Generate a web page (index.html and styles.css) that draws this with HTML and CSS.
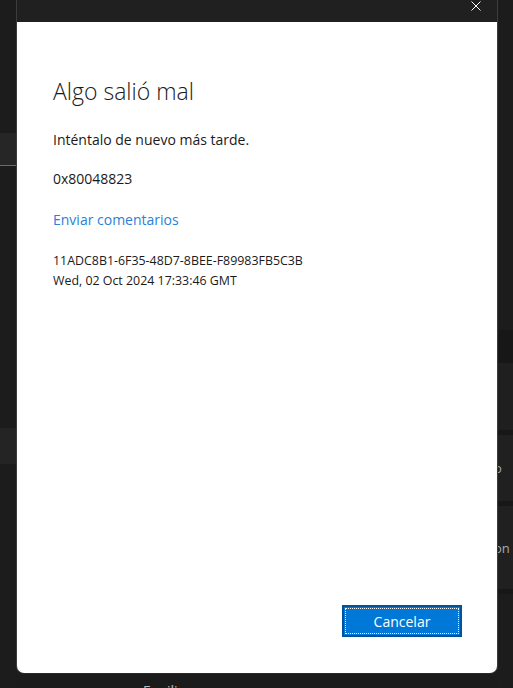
FILE: index.html
```html
<!DOCTYPE html>
<html>
<head>
    <title>Algo salió mal</title>
    <link rel="stylesheet" href="styles.css">
</head>
<body>

    <div class="app">
        <div class="rail rail-left">
            <div class="band band-tab"></div>
            <div class="band band-row"></div>
        </div>
        <div class="main">
            <div class="main-footer">
                <span class="account">Eguiliz</span>
            </div>
        </div>
        <div class="rail rail-right">
            <div class="band band-dark"></div>
            <div class="band band-item"><span>o</span></div>
            <div class="band band-item band-item-tall"><span>on c</span></div>
        </div>
    </div>

    <div class="dialog">
        <div class="titlebar">
            <button class="close-btn" title="Cerrar">
                <svg width="10" height="10" viewBox="0 0 10 10">
                    <path d="M0.5 0.5 L9.5 9.5 M9.5 0.5 L0.5 9.5" stroke="#ffffff" stroke-width="1" fill="none"/>
                </svg>
            </button>
        </div>
        <div class="dialog-body">
            <h1 class="dialog-title">Algo salió mal</h1>
            <p class="msg">Inténtalo de nuevo más tarde.</p>
            <p class="msg">0x80048823</p>
            <p class="msg msg-link"><a href="#" class="link">Enviar comentarios</a></p>
            <div class="details">
                <div>11ADC8B1-6F35-48D7-8BEE-F89983FB5C3B</div>
                <div>Wed, 02 Oct 2024 17:33:46 GMT</div>
            </div>
            <div class="dialog-footer">
                <button class="primary-btn"><span>Cancelar</span></button>
            </div>
        </div>
    </div>

</body>
</html>
```

FILE: styles.css
```css
body {
    margin: 0;
    width: 513px;
    height: 688px;
    overflow: hidden;
    position: relative;
    background-color: #1c1c1c;
    font-family: "Open Sans", "Noto Sans", Arial, sans-serif;
}

/* app behind the dialog */
.app {
    display: flex;
    height: 688px;
}

.rail {
    display: flex;
    flex-direction: column;
    overflow: hidden;
}

.rail-left {
    width: 16px;
    background-color: #1c1c1c;
}

.rail-right {
    width: 15px;
    background-color: #1c1c1c;
}

.main {
    flex: 1;
    display: flex;
    flex-direction: column;
    justify-content: flex-end;
}

.main-footer {
    height: 14px;
    background-color: #1b1b1b;
    padding-left: 127px;
    overflow: hidden;
}

.account {
    display: block;
    font-size: 14px;
    line-height: 20px;
    margin-top: 7px;
    color: #bdbdbd;
}

.band-tab {
    margin-top: 133px;
    height: 32px;
    background-color: #262626;
    border-bottom: 1px solid #6a6a6a;
}

.band-row {
    margin-top: 262px;
    height: 36px;
    background-color: #242424;
}

.band-dark {
    margin-top: 330px;
    height: 33px;
    background-color: #171717;
    border-bottom: 67px solid #1f1f1f;
}

.band-item {
    height: 66px;
    background-color: #202020;
    border-top: 5px solid #171717;
    font-size: 13px;
    color: #a8a8a8;
    display: flex;
    align-items: center;
}

.band-item span {
    margin-left: -4px;
    white-space: nowrap;
}

.band-item-tall {
    height: 83px;
    border-bottom: 5px solid #171717;
}

/* error dialog */
.dialog {
    position: absolute;
    left: 16px;
    top: 0;
    width: 480px;
    height: 673px;
    border-left: 1px solid #3c3c3c;
    border-right: 1px solid #3c3c3c;
    border-bottom: 1px solid #2a2a2a;
    border-radius: 0 0 8px 8px;
    display: flex;
    flex-direction: column;
    overflow: hidden;
}

.titlebar {
    height: 22px;
    background-color: #202020;
    display: flex;
    justify-content: flex-end;
}

.close-btn {
    background: none;
    border: none;
    padding: 1px 16px 0 0;
    height: 12px;
    display: flex;
    align-items: flex-start;
    cursor: pointer;
}

/* flex column: margins below add up, they don't collapse */
.dialog-body {
    flex: 1;
    background-color: #ffffff;
    padding: 53px 35px 36px 36px;
    display: flex;
    flex-direction: column;
    color: #1a1a1a;
}

.dialog-title {
    margin: 0 0 23px 0;
    font-size: 23px;
    font-weight: 300;
    line-height: 32px;
    color: #1a1a1a;
}

.msg {
    margin: 0 0 19px 0;
    font-size: 14px;
    line-height: 20px;
}

.msg-link {
    margin-top: 2px;
}

.link {
    color: #2b7fd6;
    text-decoration: none;
}

.details {
    margin-top: 2px;
    font-size: 12.4px;
    line-height: 20px;
}

.dialog-footer {
    margin-top: auto;
    display: flex;
    justify-content: flex-end;
}

.primary-btn {
    width: 120px;
    height: 32px;
    padding: 1px;
    border: 2px solid #00529b;
    background-color: #0078d7;
    color: #ffffff;
    font-family: inherit;
    font-size: 14px;
    cursor: pointer;
}

.primary-btn span {
    display: flex;
    align-items: center;
    justify-content: center;
    height: 100%;
    box-sizing: border-box;
    border: 1px dotted #ffffff;
}
```
